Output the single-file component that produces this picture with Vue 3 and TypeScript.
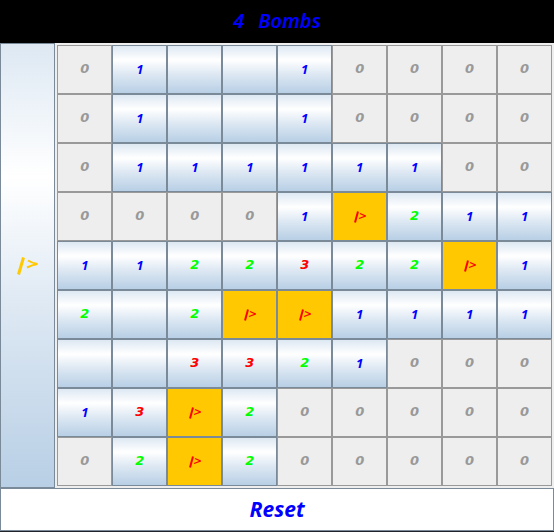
<script setup lang="ts">
import { computed, ref } from 'vue'

type Cell = { id: number; text: string; kind: string; label: string }

const layout: string[] = [
  '01  10000',
  '01  10000',
  '011111100',
  '00001F211',
  '1122322F1',
  '2 2FF1111',
  '  3321000',
  '13F200000',
  '02F200000',
]

const kinds: Record<string, string> = {
  '0': 'zero',
  '1': 'one',
  '2': 'two',
  '3': 'three',
  F: 'flag',
  ' ': 'covered',
}

const bombs = ref(4)
const flagging = ref(false)

const cells = computed<Cell[]>(() =>
  layout.join('').split('').map((c, i) => ({
    id: i,
    text: c === 'F' ? '' : c.trim(),
    kind: kinds[c],
    label: `Row ${Math.floor(i / 9) + 1}, column ${(i % 9) + 1}: ${kinds[c]}`,
  })),
)

function reset() {
  bombs.value = 4
  flagging.value = false
}
</script>

<template>
  <main class="game">
    <h1 class="status"><span>{{ bombs }}</span><span>Bombs</span></h1>
    <div class="middle">
      <button class="flagger metal" type="button" aria-label="Flag mode" :aria-pressed="flagging" @click="flagging = !flagging">
        <svg class="large-flag" viewBox="0 0 22 18" aria-hidden="true">
          <path class="pole" d="M1.5 17.5 6.5 0.5" />
          <path class="pennant" d="M11 3.5Q15 6 20.5 7Q15 8 10 10.5" />
        </svg>
      </button>
      <div class="board">
        <button
          v-for="cell in cells"
          :key="cell.id"
          type="button"
          class="cell metal"
          :class="cell.kind"
          :disabled="cell.kind === 'zero'"
          :aria-label="cell.label"
        >
          <svg v-if="cell.kind === 'flag'" class="small-flag" viewBox="0 0 12 12" aria-hidden="true">
            <path class="pole" d="M1 11.5 4 0.5" />
            <path class="pennant" d="M6 2.5 11.5 5 5 7.5" />
          </svg>
          <template v-else>{{ cell.text }}</template>
        </button>
      </div>
    </div>
    <button class="reset" type="button" @click="reset">Reset</button>
  </main>
</template>

<style>
body {
  margin: 0;
  background: #20242a;
}
</style>

<style scoped>
.game {
  box-sizing: border-box;
  display: grid;
  grid-template-rows: 43px 1fr 43px;
  height: 100vh;
  padding-bottom: 1px;
  font-family: "Noto Sans", "Open Sans", sans-serif;
  font-style: italic;
  font-weight: 700;
}

button {
  box-sizing: border-box;
  display: flex;
  align-items: center;
  justify-content: center;
  min-width: 0;
  min-height: 0;
  margin: 0;
  padding: 0;
  border: 1px solid #7a8a99;
  border-radius: 0;
  font: inherit;
}

svg {
  fill: none;
  stroke: currentColor;
}

.status {
  box-sizing: border-box;
  display: flex;
  align-items: center;
  justify-content: center;
  gap: 14px;
  margin: 0;
  padding-bottom: 2px;
  background: #000;
  color: #00f;
  font-size: 20px;
  font-weight: 600;
  line-height: 24px;
}

.middle {
  display: grid;
  grid-template-columns: 1fr 9fr;
  min-height: 0;
  background: #eee;
}

.metal {
  background: linear-gradient(#dde8f3 0%, #fff 30%, #dde8f3 60%, #b8cfe5 100%);
}

.flagger {
  color: #ffc800;
}

.large-flag {
  width: 22px;
  height: 18px;
}

.large-flag .pole {
  stroke-width: 3;
}

.large-flag .pennant {
  stroke-width: 2;
}

.small-flag {
  width: 12px;
  height: 12px;
}

.small-flag .pole {
  stroke-width: 2;
}

.small-flag .pennant {
  stroke-width: 1.3;
}

.board {
  display: grid;
  grid-template-columns: repeat(9, 1fr);
  grid-template-rows: repeat(9, 1fr);
  min-height: 0;
  padding: 2px;
}

.cell {
  padding-bottom: 2px;
  font-family: "DejaVu Sans", Verdana, sans-serif;
  font-size: 13px;
  line-height: 16px;
}

.zero {
  border-color: #999;
  background: #eee;
  color: #999;
}

.one {
  color: #00f;
  font-family: "Noto Sans", "Open Sans", sans-serif;
}

.two {
  color: #0f0;
}

.three {
  color: #f00;
}

.flag {
  padding-bottom: 0;
  background: #ffc800;
  color: #f00;
}

.reset {
  padding-bottom: 2px;
  background: #fff;
  color: #00f;
  font-size: 21px;
}
</style>
